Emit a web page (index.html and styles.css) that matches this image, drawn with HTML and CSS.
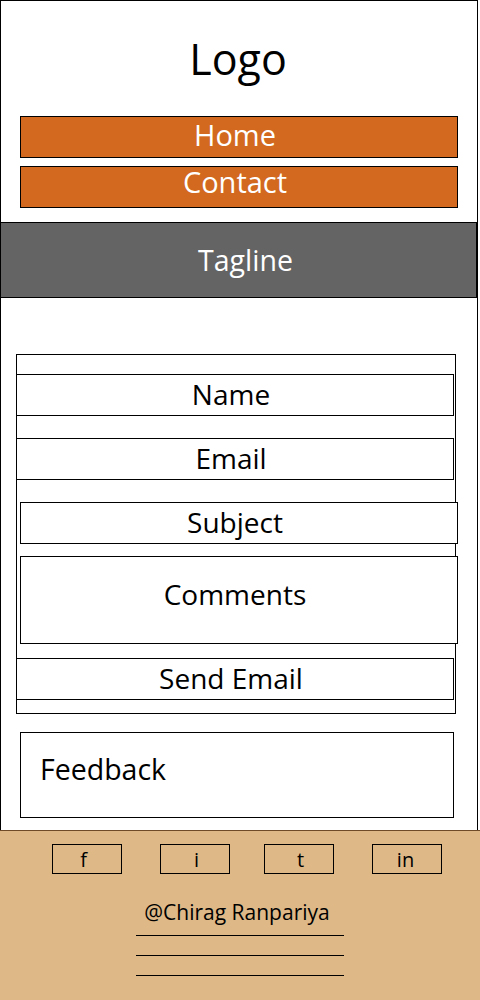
FILE: index.html
```html
<!DOCTYPE html>
<html>
<head>
<meta charset="utf-8">
<link rel="stylesheet" href="styles.css">
</head>
<body>
<div class="frame">
  <header class="logo">Logo</header>
  <nav class="nav">
    <a class="nav-btn">Home</a>
    <a class="nav-btn nav-contact">Contact</a>
  </nav>
  <div class="tagline">Tagline</div>
  <form class="form">
    <div class="field field-left">Name</div>
    <div class="field field-left field-email">Email</div>
    <div class="field field-right field-subject">Subject</div>
    <div class="field field-right field-comments">Comments</div>
    <div class="field field-left field-send">Send Email</div>
  </form>
  <div class="feedback">Feedback</div>
</div>
<footer class="footer">
  <div class="social">
    <span class="soc">f</span>
    <span class="soc">i</span>
    <span class="soc">t</span>
    <span class="soc">in</span>
  </div>
  <div class="credit">@Chirag Ranpariya</div>
  <div class="rules">
    <div class="rule"></div>
    <div class="rule"></div>
    <div class="rule"></div>
  </div>
</footer>
</body>
</html>
```

FILE: styles.css
```css
* { box-sizing: border-box; }
html, body { margin: 0; padding: 0; background: #fff; }
body {
  width: 480px;
  font-family: "Open Sans", "Noto Sans", sans-serif;
  color: #000;
}
.frame {
  width: 478px;
  height: 830px;
  border: 1px solid #000;
  border-bottom: none;
  display: flex;
  flex-direction: column;
}
.logo {
  font-size: 43px;
  line-height: 50px;
  text-align: center;
  margin-top: 33px;
  height: 50px;
  padding-right: 2px;
}
.nav {
  margin: 32px 0 0 19px;
  width: 438px;
  display: flex;
  flex-direction: column;
  gap: 8px;
}
.nav-btn {
  display: block;
  height: 42px;
  background: #d2691e;
  border: 1px solid #000;
  color: #fff;
  font-size: 29px;
  line-height: 36px;
  text-align: center;
  padding-right: 8px;
}
.nav-contact { line-height: 30px; }
.tagline {
  margin: 14px 0 0 -1px;
  width: 477px;
  height: 76px;
  background: #646464;
  border: 1px solid #000;
  color: #fff;
  font-size: 28.5px;
  line-height: 74px;
  text-align: center;
  padding-left: 14px;
}
.form {
  margin: 56px 0 0 15px;
  width: 440px;
  height: 360px;
  border: 1px solid #000;
  padding-top: 19px;
  display: flex;
  flex-direction: column;
}
.field {
  height: 42px;
  border: 1px solid #000;
  font-size: 28px;
  line-height: 38px;
  text-align: center;
  background: #fff;
  padding-right: 8px;
}
.field-left { margin-left: -1px; width: 438px; }
.field-right { margin-left: 3px; width: 438px; }
.field-email { margin-top: 22px; }
.field-subject { margin-top: 22px; }
.field-comments { margin-top: 12px; height: 88px; line-height: 74px; }
.field-send { margin-top: 14px; }
.feedback {
  margin: 18px 0 0 19px;
  width: 434px;
  height: 86px;
  border: 1px solid #000;
  font-size: 28.5px;
  line-height: 72px;
  padding-left: 19px;
}
.footer {
  height: 170px;
  width: 480px;
  background: #deb887;
  border-top: 1px solid #6e4a28;
  padding-top: 13px;
}
.social {
  display: flex;
  padding-left: 52px;
}
.soc {
  width: 70px;
  height: 30px;
  border: 1px solid #000;
  font-size: 20px;
  line-height: 30px;
  text-align: center;
}
.soc:nth-child(2) { margin-left: 38px; padding-left: 3px; }
.soc:nth-child(3) { margin-left: 34px; padding-left: 3px; }
.soc:nth-child(4) { margin-left: 38px; padding-right: 3px; }
.soc:nth-child(1) { padding-right: 7px; }
.credit {
  margin-top: 24px;
  text-align: center;
  font-size: 21px;
  line-height: 28px;
  padding-right: 6px;
}
.rules {
  width: 208px;
  margin: 9px 0 0 136px;
  display: flex;
  flex-direction: column;
  gap: 19px;
}
.rule { height: 1px; background: #000; }
```
